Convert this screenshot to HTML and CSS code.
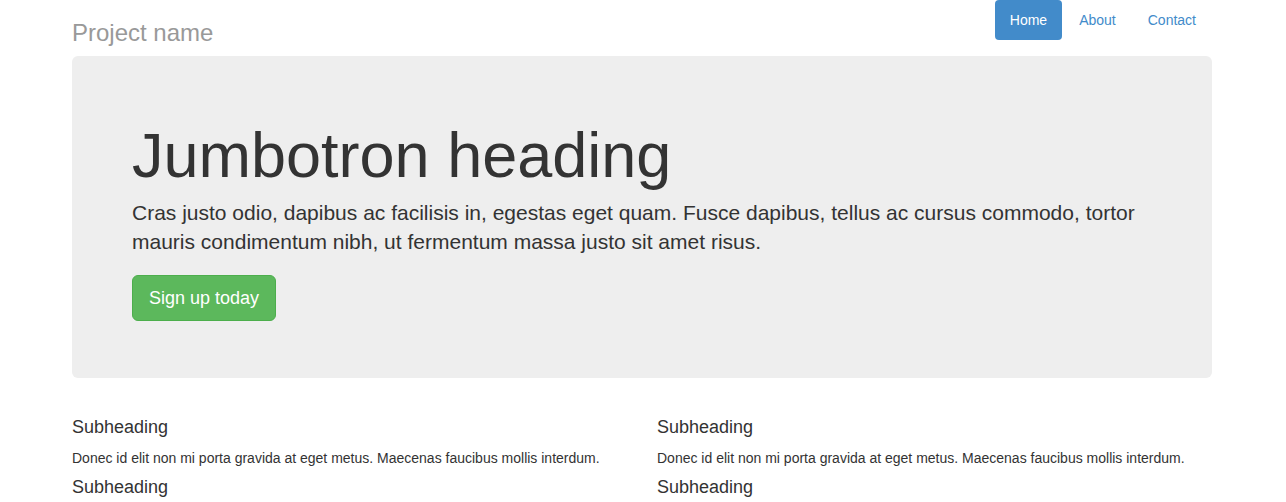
FILE: index.html
```html
<!DOCTYPE html>
<html>
<head>
<meta charset="utf-8">
<title>Narrow Jumbotron</title>
<link rel="stylesheet" href="styles.css">
</head>
<body>
<div class="container">
  <div class="header">
    <h3 class="brand">Project name</h3>
    <ul class="nav">
      <li><a class="active" href="#">Home</a></li>
      <li><a href="#">About</a></li>
      <li><a href="#">Contact</a></li>
    </ul>
  </div>
  <div class="jumbotron">
    <h1>Jumbotron heading</h1>
    <p class="lead">Cras justo odio, dapibus ac facilisis in, egestas eget quam. Fusce dapibus, tellus ac cursus commodo, tortor mauris condimentum nibh, ut fermentum massa justo sit amet risus.</p>
    <div class="actions"><a class="btn" href="#">Sign up today</a></div>
  </div>
  <div class="marketing">
    <div class="col">
      <h4>Subheading</h4>
      <p>Donec id elit non mi porta gravida at eget metus. Maecenas faucibus mollis interdum.</p>
      <h4>Subheading</h4>
      <p>Morbi leo risus, porta ac consectetur ac, vestibulum at eros. Cras mattis consectetur purus sit amet fermentum.</p>
    </div>
    <div class="col">
      <h4>Subheading</h4>
      <p>Donec id elit non mi porta gravida at eget metus. Maecenas faucibus mollis interdum.</p>
      <h4>Subheading</h4>
      <p>Morbi leo risus, porta ac consectetur ac, vestibulum at eros. Cras mattis consectetur purus sit amet fermentum.</p>
    </div>
  </div>
</div>
</body>
</html>
```
FILE: styles.css
```css
html, body {
  margin: 0;
  padding: 0;
  background: #fff;
}
body {
  font-family: "Liberation Sans", Arial, sans-serif;
  font-size: 14px;
  line-height: 20px;
  color: #333;
}
.container {
  width: 1140px;
  margin-left: calc(50% - 571px);
}
.header {
  display: flex;
  justify-content: space-between;
  align-items: flex-start;
  height: 56px;
}
.brand {
  margin: 20px 0 0;
  font-size: 24px;
  line-height: 26.4px;
  font-weight: normal;
  color: #999;
}
.nav {
  display: flex;
  list-style: none;
  margin: 0 1px 0 0;
  padding: 0;
}
.nav li + li {
  margin-left: 2px;
}
.nav a {
  display: block;
  padding: 10px 15px;
  border-radius: 4px;
  color: #428bca;
  text-decoration: none;
  font-size: 14px;
  line-height: 20px;
}
.nav a.active {
  background: #428bca;
  color: #fff;
}
.jumbotron {
  background: #eee;
  border-radius: 6px;
  padding: 48px 60px 57px;
  margin-bottom: 30px;
}
.jumbotron h1 {
  margin: 17px 0 8px;
  font-size: 63px;
  line-height: 69.3px;
  font-weight: normal;
  color: #333;
}
.lead {
  margin: 0 0 19px;
  font-size: 21px;
  line-height: 29px;
}
.actions {
  display: flex;
}
.btn {
  display: block;
  padding: 10px 16px;
  font-size: 18px;
  line-height: 24px;
  color: #fff;
  background: #5cb85c;
  border: 1px solid #4cae4c;
  border-radius: 6px;
  text-decoration: none;
}
.marketing {
  display: grid;
  grid-template-columns: 1fr 1fr;
  column-gap: 30px;
}
.marketing h4 {
  margin: 10px 0 10px;
  font-size: 18px;
  line-height: 19.8px;
  font-weight: normal;
}
.marketing p {
  margin: 0 0 10px;
  font-size: 14px;
  line-height: 20px;
}
```
